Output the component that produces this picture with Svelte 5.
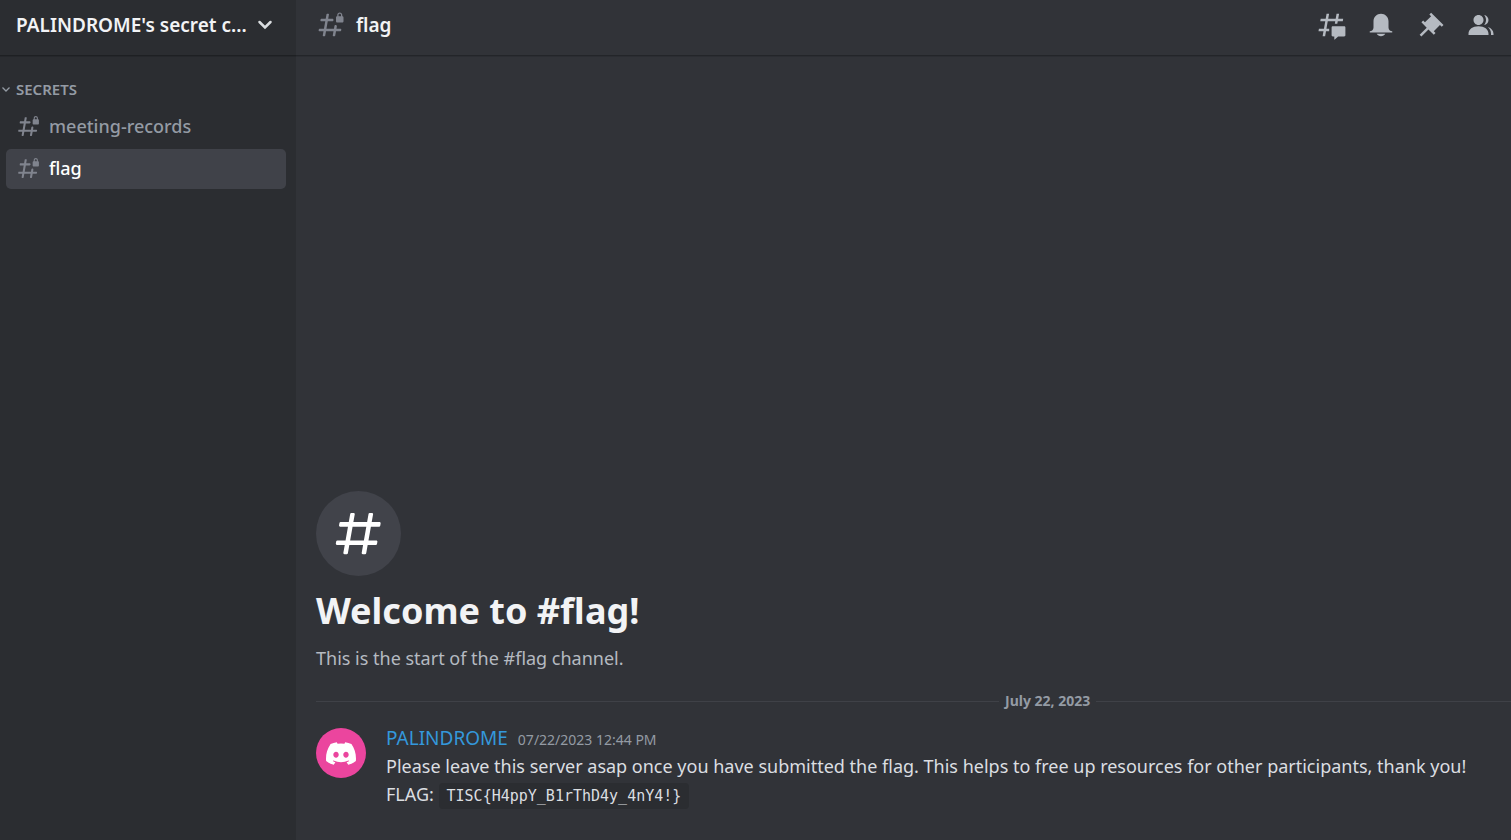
<script>
  const channels = [
    { name: 'meeting-records', active: false },
    { name: 'flag', active: true }
  ];
  const tools = [
    {
      label: 'Threads',
      paths: [
        'M5.43309 21C5.35842 21 5.30189 20.9325 5.31494 20.859L5.99991 17H2.14274C2.06819 17 2.01168 16.9327 2.02453 16.8593L2.33253 15.0993C2.34258 15.0419 2.39244 15 2.45074 15H6.34991L7.40991 9H3.55274C3.47819 9 3.42168 8.93274 3.43453 8.85931L3.74253 7.09931C3.75258 7.04189 3.80244 7 3.86074 7H7.75991L8.45234 3.09903C8.46251 3.04174 8.51231 3 8.57049 3H10.3267C10.4014 3 10.4579 3.06746 10.4449 3.14097L9.75991 7H15.7599L16.4523 3.09903C16.4625 3.04174 16.5123 3 16.5705 3H18.3267C18.4014 3 18.4579 3.06746 18.4449 3.14097L17.7599 7H21.6171C21.6916 7 21.7481 7.06725 21.7353 7.14069L21.4273 8.90069C21.4172 8.95811 21.3674 9 21.3091 9H17.4099L17.0495 11.04H15.05L15.4104 9H9.41035L8.35035 15H10.5599V17H7.99991L7.30749 20.901C7.29732 20.9583 7.24752 21 7.18934 21H5.43309Z',
        'M13.4399 12.96C12.9097 12.96 12.4799 13.3898 12.4799 13.92V20.2213C12.4799 20.7515 12.9097 21.1813 13.4399 21.1813H14.3999C14.5325 21.1813 14.6399 21.2887 14.6399 21.4213V23.4597C14.6399 23.6677 14.8865 23.7773 15.0408 23.6378L17.4858 21.4289C17.6622 21.2695 17.8916 21.1813 18.1294 21.1813H22.5599C23.0901 21.1813 23.5199 20.7515 23.5199 20.2213V13.92C23.5199 13.3898 23.0901 12.96 22.5599 12.96H13.4399Z'
      ]
    },
    {
      label: 'Notification Settings',
      paths: [
        'M18 9V14C18 15.657 19.344 17 21 17V18H3V17C4.656 17 6 15.657 6 14V9C6 5.686 8.686 3 12 3C15.314 3 18 5.686 18 9ZM11.9999 21C10.5239 21 9.24793 20.19 8.55493 19H15.4449C14.7519 20.19 13.4759 21 11.9999 21Z'
      ]
    },
    {
      label: 'Pinned Messages',
      paths: [
        'M22 12L12.101 2.10101L10.686 3.51401L12.101 4.92901L7.15096 9.87801V9.88001L5.73596 8.46501L4.32196 9.88001L8.56496 14.122L2.90796 19.778L4.322 21.192L9.97896 15.536L14.222 19.778L15.636 18.364L14.222 16.95L19.171 12H19.172L20.586 13.414L22 12Z'
      ]
    },
    {
      label: 'Member List',
      paths: [
        'M14 8.00598C14 10.211 12.206 12.006 10 12.006C7.795 12.006 6 10.211 6 8.00598C6 5.80098 7.794 4.00598 10 4.00598C12.206 4.00598 14 5.80098 14 8.00598ZM2 19.006C2 15.473 5.29 13.006 10 13.006C14.711 13.006 18 15.473 18 19.006V20.006H2V19.006Z',
        'M20.0001 20.006H22.0001V19.006C22.0001 16.4433 20.2697 14.4415 17.5213 13.5352C19.0621 14.9127 20.0001 16.8059 20.0001 19.006V20.006Z',
        'M14.8834 11.9077C16.6657 11.5044 18.0001 9.9077 18.0001 8.00598C18.0001 5.96916 16.4693 4.28218 14.4971 4.0367C15.4322 5.09511 16.0001 6.48524 16.0001 8.00598C16.0001 9.44888 15.4889 10.7742 14.6378 11.8102C14.7203 11.8418 14.8022 11.8743 14.8834 11.9077Z'
      ]
    }
  ];
</script>

{#snippet lockedHash()}
  <svg class="hash" viewBox="0 0 24 24" aria-hidden="true">
    <path d="M14 8C14 7.44772 13.5523 7 13 7H9.76001L10.3657 3.58738C10.4201 3.28107 10.1845 3 9.87344 3H8.88907C8.64664 3 8.43914 3.17391 8.39677 3.41262L7.76001 7H4.18011C3.93722 7 3.72946 7.17456 3.68759 7.41381L3.51259 8.41381C3.45905 8.71977 3.69449 9 4.00511 9H7.41001L6.35001 15H2.77011C2.52722 15 2.31946 15.1746 2.27759 15.4138L2.10259 16.4138C2.04905 16.7198 2.28449 17 2.59511 17H6.00001L5.39427 20.4126C5.3399 20.7189 5.57547 21 5.88657 21H6.87094C7.11337 21 7.32088 20.8261 7.36325 20.5874L8.00001 17H14L13.3943 20.4126C13.3399 20.7189 13.5755 21 13.8866 21H14.8709C15.1134 21 15.3209 20.8261 15.3632 20.5874L16 17H19.5799C19.8228 17 20.0306 16.8254 20.0724 16.5862L20.2474 15.5862C20.301 15.2802 20.0655 15 19.7549 15H16.35L16.6758 13.1558C16.7823 12.5529 16.3186 12 15.7063 12C15.2286 12 14.8199 12.3429 14.7368 12.8133L14.3504 15H8.35045L9.41045 9H13C13.5523 9 14 8.55228 14 8Z" />
    <path d="M21.025 5V4C21.025 2.88 20.05 2 19 2C17.95 2 17 2.88 17 4V5C16.4477 5 16 5.44772 16 6V9C16 9.55228 16.4477 10 17 10H21C21.5523 10 22 9.55228 22 9V5.975C22 5.43652 21.5635 5 21.025 5ZM20 5H18V4C18 3.42857 18.4667 3 19 3C19.5333 3 20 3.42857 20 4V5Z" />
  </svg>
{/snippet}

<div class="app">
  <aside class="sidebar">
    <header class="bar">
      <button class="server">
        <span class="server-name">PALINDROME's secret c...</span>
        <svg class="chevron" viewBox="0 0 24 24" aria-hidden="true"><path d="M6.5 9l5.5 5.5L17.5 9" /></svg>
      </button>
    </header>
    <nav class="channels">
      <button class="category">
        <svg class="caret" viewBox="0 0 10 10" aria-hidden="true"><path d="M1.5 3.5L5 7l3.5-3.5" /></svg>
        SECRETS
      </button>
      {#each channels as channel}
        <a href="#{channel.name}" class="channel" class:active={channel.active}>
          {@render lockedHash()}
          <span>{channel.name}</span>
        </a>
      {/each}
    </nav>
  </aside>

  <main class="chat">
    <header class="bar chat-bar">
      <div class="title">
        {@render lockedHash()}
        <h1>flag</h1>
      </div>
      <div class="tools">
        {#each tools as tool}
          <button class="tool" aria-label={tool.label}>
            <svg viewBox="0 0 24 24" aria-hidden="true">
              {#each tool.paths as d}<path {d} />{/each}
            </svg>
          </button>
        {/each}
      </div>
    </header>

    <div class="messages">
      <div class="emblem">
        <svg viewBox="0 0 24 24" aria-hidden="true">
          <path fill-rule="evenodd" d="M5.88657 21C5.57547 21 5.3399 20.7189 5.39427 20.4126L6.00001 17H2.59511C2.28449 17 2.04905 16.7198 2.10259 16.4138L2.27759 15.4138C2.31946 15.1746 2.52722 15 2.77011 15H6.35001L7.41001 9H4.00511C3.69449 9 3.45905 8.71977 3.51259 8.41381L3.68759 7.41381C3.72946 7.17456 3.93722 7 4.18011 7H7.76001L8.39677 3.41262C8.43914 3.17391 8.64664 3 8.88907 3H9.87344C10.1845 3 10.4201 3.28107 10.3657 3.58738L9.76001 7H15.76L16.3968 3.41262C16.4391 3.17391 16.6466 3 16.8891 3H17.8734C18.1845 3 18.4201 3.28107 18.3657 3.58738L17.76 7H21.1649C21.4755 7 21.711 7.28023 21.6574 7.58619L21.4824 8.58619C21.4406 8.82544 21.2328 9 20.9899 9H17.41L16.35 15H19.7549C20.0655 15 20.301 15.2802 20.2474 15.5862L20.0724 16.5862C20.0306 16.8254 19.8228 17 19.5799 17H16L15.3632 20.5874C15.3209 20.8261 15.1134 21 14.8709 21H13.8866C13.5755 21 13.3399 20.7189 13.3943 20.4126L14 17H8.00001L7.36325 20.5874C7.32088 20.8261 7.11337 21 6.87094 21H5.88657ZM9.41045 9L8.35045 15H14.3504L15.4104 9H9.41045Z" />
        </svg>
      </div>
      <h2>Welcome to #flag!</h2>
      <p class="intro">This is the start of the #flag channel.</p>
      <div class="divider"><span>July 22, 2023</span></div>
      <article class="message">
        <div class="avatar">
          <svg viewBox="0 0 127.14 96.36" aria-hidden="true">
            <path d="M107.7,8.07A105.15,105.15,0,0,0,81.47,0a72.06,72.06,0,0,0-3.36,6.83A97.68,97.68,0,0,0,49,6.83,72.37,72.37,0,0,0,45.64,0,105.89,105.89,0,0,0,19.39,8.09C2.79,32.65-1.71,56.6.54,80.21h0A105.73,105.73,0,0,0,32.71,96.36,77.7,77.7,0,0,0,39.6,85.25a68.42,68.42,0,0,1-10.85-5.18c.91-.66,1.8-1.34,2.66-2a75.57,75.57,0,0,0,64.32,0c.87.71,1.76,1.39,2.66,2a68.68,68.68,0,0,1-10.87,5.19,77,77,0,0,0,6.89,11.1A105.25,105.25,0,0,0,126.6,80.22h0C129.24,52.84,122.09,29.11,107.7,8.07ZM42.45,65.69C36.18,65.69,31,60,31,53s5-12.74,11.43-12.74S54,46,53.89,53,48.84,65.69,42.45,65.69Zm42.24,0C78.41,65.69,73.25,60,73.25,53s5-12.74,11.44-12.74S96.23,46,96.12,53,91.08,65.69,84.69,65.69Z" />
          </svg>
        </div>
        <div class="body">
          <div class="meta">
            <span class="author">PALINDROME</span>
            <time datetime="2023-07-22T12:44">07/22/2023 12:44 PM</time>
          </div>
          <p>Please leave this server asap once you have submitted the flag. This helps to free up resources for other participants, thank you!</p>
          <p>FLAG: <code>{'TISC{H4ppY_B1rThD4y_4nY4!}'}</code></p>
        </div>
      </article>
    </div>
  </main>
</div>

<style>
  :global(body) {
    margin: 0;
    background: #313338;
  }
  .app {
    display: flex;
    min-height: 100vh;
    font-family: 'Noto Sans', sans-serif;
    font-size: 18px;
    color: #dbdee1;
  }
  h1, h2, p {
    margin: 0;
  }
  button {
    padding: 0;
    border: 0;
    background: none;
    color: inherit;
    font: inherit;
    text-align: left;
    cursor: pointer;
  }
  svg {
    display: block;
    flex: none;
    fill: currentColor;
  }
  .bar {
    box-sizing: border-box;
    height: 55px;
    padding-bottom: 5px;
    box-shadow: 0 1px 0 rgba(4, 4, 5, 0.2), 0 2px 0 rgba(6, 6, 7, 0.05), 0 2px 0 rgba(4, 4, 5, 0.05);
  }
  .sidebar {
    flex: none;
    width: 296px;
    background: #2b2d31;
  }
  .server {
    display: flex;
    align-items: center;
    justify-content: space-between;
    width: 100%;
    height: 50px;
    padding: 0 19px 0 16px;
    color: #f2f3f5;
    font-size: 19px;
    font-weight: 600;
  }
  .server-name {
    white-space: nowrap;
  }
  .chevron {
    width: 24px;
    height: 24px;
    fill: none;
    stroke: #dbdee1;
    stroke-width: 2.5;
    stroke-linecap: round;
  }
  .channels {
    display: flex;
    flex-direction: column;
    gap: 2px;
    padding: 24px 10px 0 6px;
  }
  .category {
    display: flex;
    align-items: center;
    gap: 5px;
    height: 20px;
    margin: 0 0 6px -5px;
    color: #949ba4;
    font-size: 15px;
    font-weight: 600;
  }
  .caret {
    width: 10px;
    height: 10px;
    fill: none;
    stroke: currentColor;
    stroke-width: 1.3;
  }
  .channel {
    box-sizing: border-box;
    display: flex;
    align-items: center;
    gap: 8px;
    height: 40px;
    padding: 0 10px 2px;
    border-radius: 5px;
    color: #949ba4;
    font-weight: 500;
    text-decoration: none;
  }
  .channel.active {
    background: #404249;
    color: #fff;
  }
  .hash {
    width: 25px;
    height: 25px;
    color: #80848e;
  }
  .chat {
    display: flex;
    flex: 1;
    flex-direction: column;
    min-width: 0;
    background: #313338;
  }
  .chat-bar {
    display: flex;
    align-items: center;
    justify-content: space-between;
    padding-left: 20px;
    padding-right: 15px;
  }
  .title {
    display: flex;
    align-items: center;
    gap: 10px;
  }
  .title .hash {
    width: 30px;
    height: 30px;
  }
  h1 {
    color: #f2f3f5;
    font-size: 19px;
    font-weight: 600;
  }
  .tools {
    display: flex;
    gap: 20px;
    color: #b5bac1;
  }
  .tool svg {
    width: 30px;
    height: 30px;
  }
  .messages {
    display: flex;
    flex: 1;
    flex-direction: column;
    justify-content: flex-end;
    padding: 0 0 30px 20px;
  }
  .emblem {
    display: grid;
    place-items: center;
    width: 85px;
    height: 85px;
    border-radius: 50%;
    background: #41434a;
    color: #fff;
  }
  .emblem svg {
    width: 55px;
    height: 55px;
  }
  h2 {
    margin-top: 10px;
    color: #f2f3f5;
    font-size: 36px;
    font-weight: 700;
    line-height: 50px;
  }
  .intro {
    margin-top: 8px;
    color: #b5bac1;
    line-height: 28px;
  }
  .divider {
    display: flex;
    align-items: center;
    gap: 6px;
    margin-top: 20px;
    color: #949ba4;
    font-size: 14px;
    font-weight: 700;
    line-height: 18px;
  }
  .divider::before,
  .divider::after {
    content: '';
    flex: 28;
    height: 1px;
    background: #3f4147;
  }
  .divider::after {
    flex: 17;
  }
  .message {
    display: flex;
    gap: 20px;
    margin-top: 16px;
    line-height: 28px;
  }
  .avatar {
    display: grid;
    flex: none;
    place-items: center;
    width: 50px;
    height: 50px;
    margin-top: 2px;
    border-radius: 50%;
    background: #eb459e;
    color: #fff;
  }
  .avatar svg {
    width: 30px;
    height: 23px;
  }
  .meta {
    display: flex;
    align-items: baseline;
    gap: 10px;
    line-height: 24px;
  }
  .author {
    color: #3498db;
    font-size: 19px;
  }
  time {
    color: #949ba4;
    font-size: 14px;
  }
  code {
    padding: 4px 8px;
    border-radius: 4px;
    background: #2b2d31;
    font-family: 'DejaVu Sans Mono', monospace;
    font-size: 15px;
  }
</style>
